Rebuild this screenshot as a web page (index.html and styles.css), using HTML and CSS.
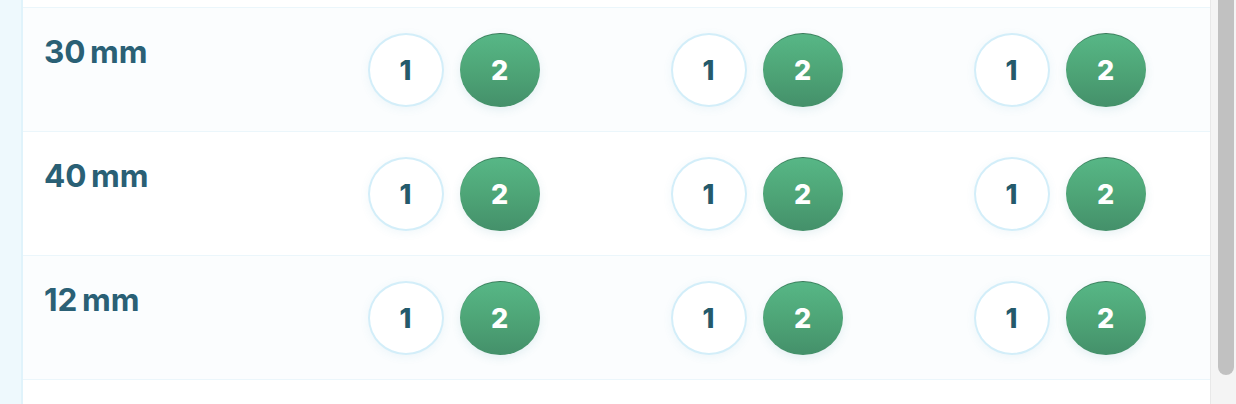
FILE: index.html
```html
<!DOCTYPE html>
<html>
<head>
<meta charset="utf-8">
<link rel="stylesheet" href="styles.css">
</head>
<body>
<div class="page">
  <div class="side"></div>
  <div class="content">
    <div class="top-gap"></div>
    <div class="row">
      <div class="label">30 mm</div>
      <div class="cell"><span class="opt">1</span><span class="opt on">2</span></div>
      <div class="cell"><span class="opt">1</span><span class="opt on">2</span></div>
      <div class="cell"><span class="opt">1</span><span class="opt on">2</span></div>
    </div>
    <div class="row alt">
      <div class="label">40 mm</div>
      <div class="cell"><span class="opt">1</span><span class="opt on">2</span></div>
      <div class="cell"><span class="opt">1</span><span class="opt on">2</span></div>
      <div class="cell"><span class="opt">1</span><span class="opt on">2</span></div>
    </div>
    <div class="row">
      <div class="label">12 mm</div>
      <div class="cell"><span class="opt">1</span><span class="opt on">2</span></div>
      <div class="cell"><span class="opt">1</span><span class="opt on">2</span></div>
      <div class="cell"><span class="opt">1</span><span class="opt on">2</span></div>
    </div>
  </div>
  <div class="scrollbar"><div class="thumb"></div></div>
</div>
</body>
</html>
```
FILE: styles.css
```css
html, body {
  margin: 0;
  padding: 0;
  background: #ffffff;
}
.page {
  display: flex;
  width: 1236px;
  height: 404px;
  overflow: hidden;
  font-family: Inter, "Liberation Sans", sans-serif;
}
.side {
  width: 21px;
  flex: none;
  background: #eef9fd;
  border-right: 2px solid #e0f3fb;
}
.content {
  width: 1187px;
  flex: none;
  display: flex;
  flex-direction: column;
}
.top-gap {
  height: 7px;
  border-bottom: 1px solid #ebf6fb;
  background: #ffffff;
}
.row {
  height: 123px;
  border-bottom: 1px solid #ebf6fb;
  background: #fbfdfe;
  display: grid;
  grid-template-columns: 278px 303px 303px 303px;
  box-sizing: content-box;
}
.row.alt {
  background: #ffffff;
}
.label {
  padding: 26px 0 0 21px;
  font-size: 31.5px;
  font-weight: 700;
  line-height: 36px;
  color: #2a6075;
  word-spacing: -3px;
}
.cell {
  display: flex;
  justify-content: center;
  align-items: flex-start;
  gap: 16px;
  padding-top: 25px;
  padding-left: 2px;
}
.opt {
  box-sizing: border-box;
  width: 76px;
  height: 74px;
  border-radius: 50%;
  border: 2px solid #d3eef9;
  background: #ffffff;
  display: flex;
  align-items: center;
  justify-content: center;
  font-size: 27px;
  font-weight: 800;
  color: #245a6b;
  box-shadow: 0 2px 10px rgba(60, 150, 190, 0.08);
}
.opt.on {
  width: 80px;
  border: none;
  border-top: 1px solid rgba(50, 110, 80, 0.7);
  background: linear-gradient(180deg, #57b786 0%, #4ea577 50%, #44906a 100%);
  color: #ffffff;
  box-shadow: 0 3px 10px rgba(60, 140, 160, 0.12);
}
.scrollbar {
  flex: 1;
  background: #f4f4f4;
  border-left: 1px solid #e8e8e8;
}
.thumb {
  margin: 0 2px 0 7px;
  height: 375px;
  background: #c1c1c1;
  border-radius: 0 0 8px 8px;
}
```
